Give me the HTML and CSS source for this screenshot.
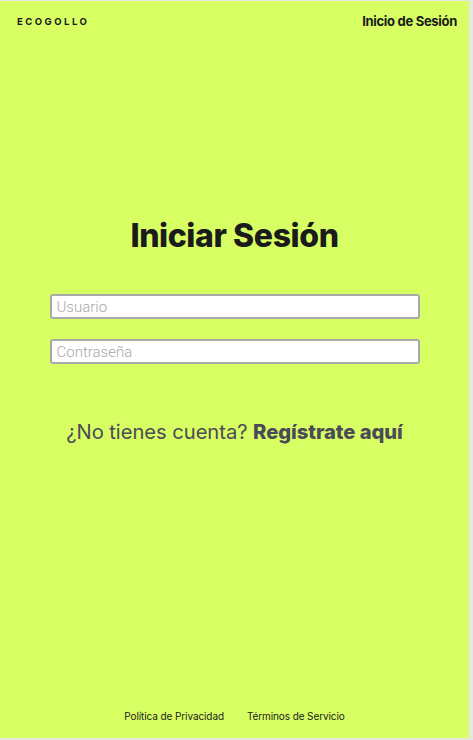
FILE: index.html
```html
<!DOCTYPE html>
<html lang="es">
<head>
<meta charset="utf-8">
<title>Iniciar Sesión</title>
<link rel="stylesheet" href="styles.css">
</head>
<body>
<div class="page">
  <header class="topbar">
    <span class="brand">ECOGOLLO</span>
    <span class="nav-link">Inicio de Sesión</span>
  </header>
  <main class="content">
    <h1 class="title">Iniciar Sesión</h1>
    <form class="form">
      <input class="field" type="text" placeholder="Usuario">
      <input class="field" type="password" placeholder="Contraseña">
    </form>
    <p class="signup">¿No tienes cuenta? <strong>Regístrate aquí</strong></p>
  </main>
  <footer class="footer">
    <span>Política de Privacidad</span>
    <span>Términos de Servicio</span>
  </footer>
</div>
</body>
</html>
```
FILE: styles.css
```css
html { background: #e6e6e6; }
body { margin: 0; }
.page {
  margin-top: 1px;
  width: 469px;
  height: 737px;
  background: #d7fe63;
  display: flex;
  flex-direction: column;
  font-family: Inter, "Liberation Sans", sans-serif;
  color: #1b1b1b;
}
.topbar {
  display: flex;
  justify-content: space-between;
  align-items: center;
  padding: 12px 12px 0 17px;
  height: 16px;
}
.brand {
  font-size: 9.5px;
  font-weight: 700;
  letter-spacing: 2.5px;
}
.nav-link {
  font-size: 13px;
  font-weight: 700;
  letter-spacing: -0.3px;
}
.content {
  flex: 1;
  display: flex;
  flex-direction: column;
  align-items: center;
  padding-top: 187px;
}
.title {
  margin: 0;
  font-size: 32px;
  font-weight: 800;
  letter-spacing: -0.4px;
  line-height: 40px;
}
.form {
  margin-top: 38px;
  display: flex;
  flex-direction: column;
  gap: 20px;
}
.field {
  box-sizing: border-box;
  width: 370px;
  height: 25px;
  margin: 0;
  border: 2px solid #a9a9a9;
  border-radius: 3px;
  background: #fff;
  padding: 0 5px;
  font-family: Roboto, sans-serif;
  font-weight: 300;
  font-size: 15px;
}
.field::placeholder { color: #a8a8a8; }
.signup {
  margin: 55px 0 0;
  font-size: 20.2px;
  color: #4b4b57;
  letter-spacing: -0.05px;
}
.signup strong { font-weight: 800; }
.footer {
  display: flex;
  justify-content: center;
  gap: 23px;
  padding-bottom: 16px;
  font-size: 10px;
  letter-spacing: -0.1px;
  color: #222;
}
```
